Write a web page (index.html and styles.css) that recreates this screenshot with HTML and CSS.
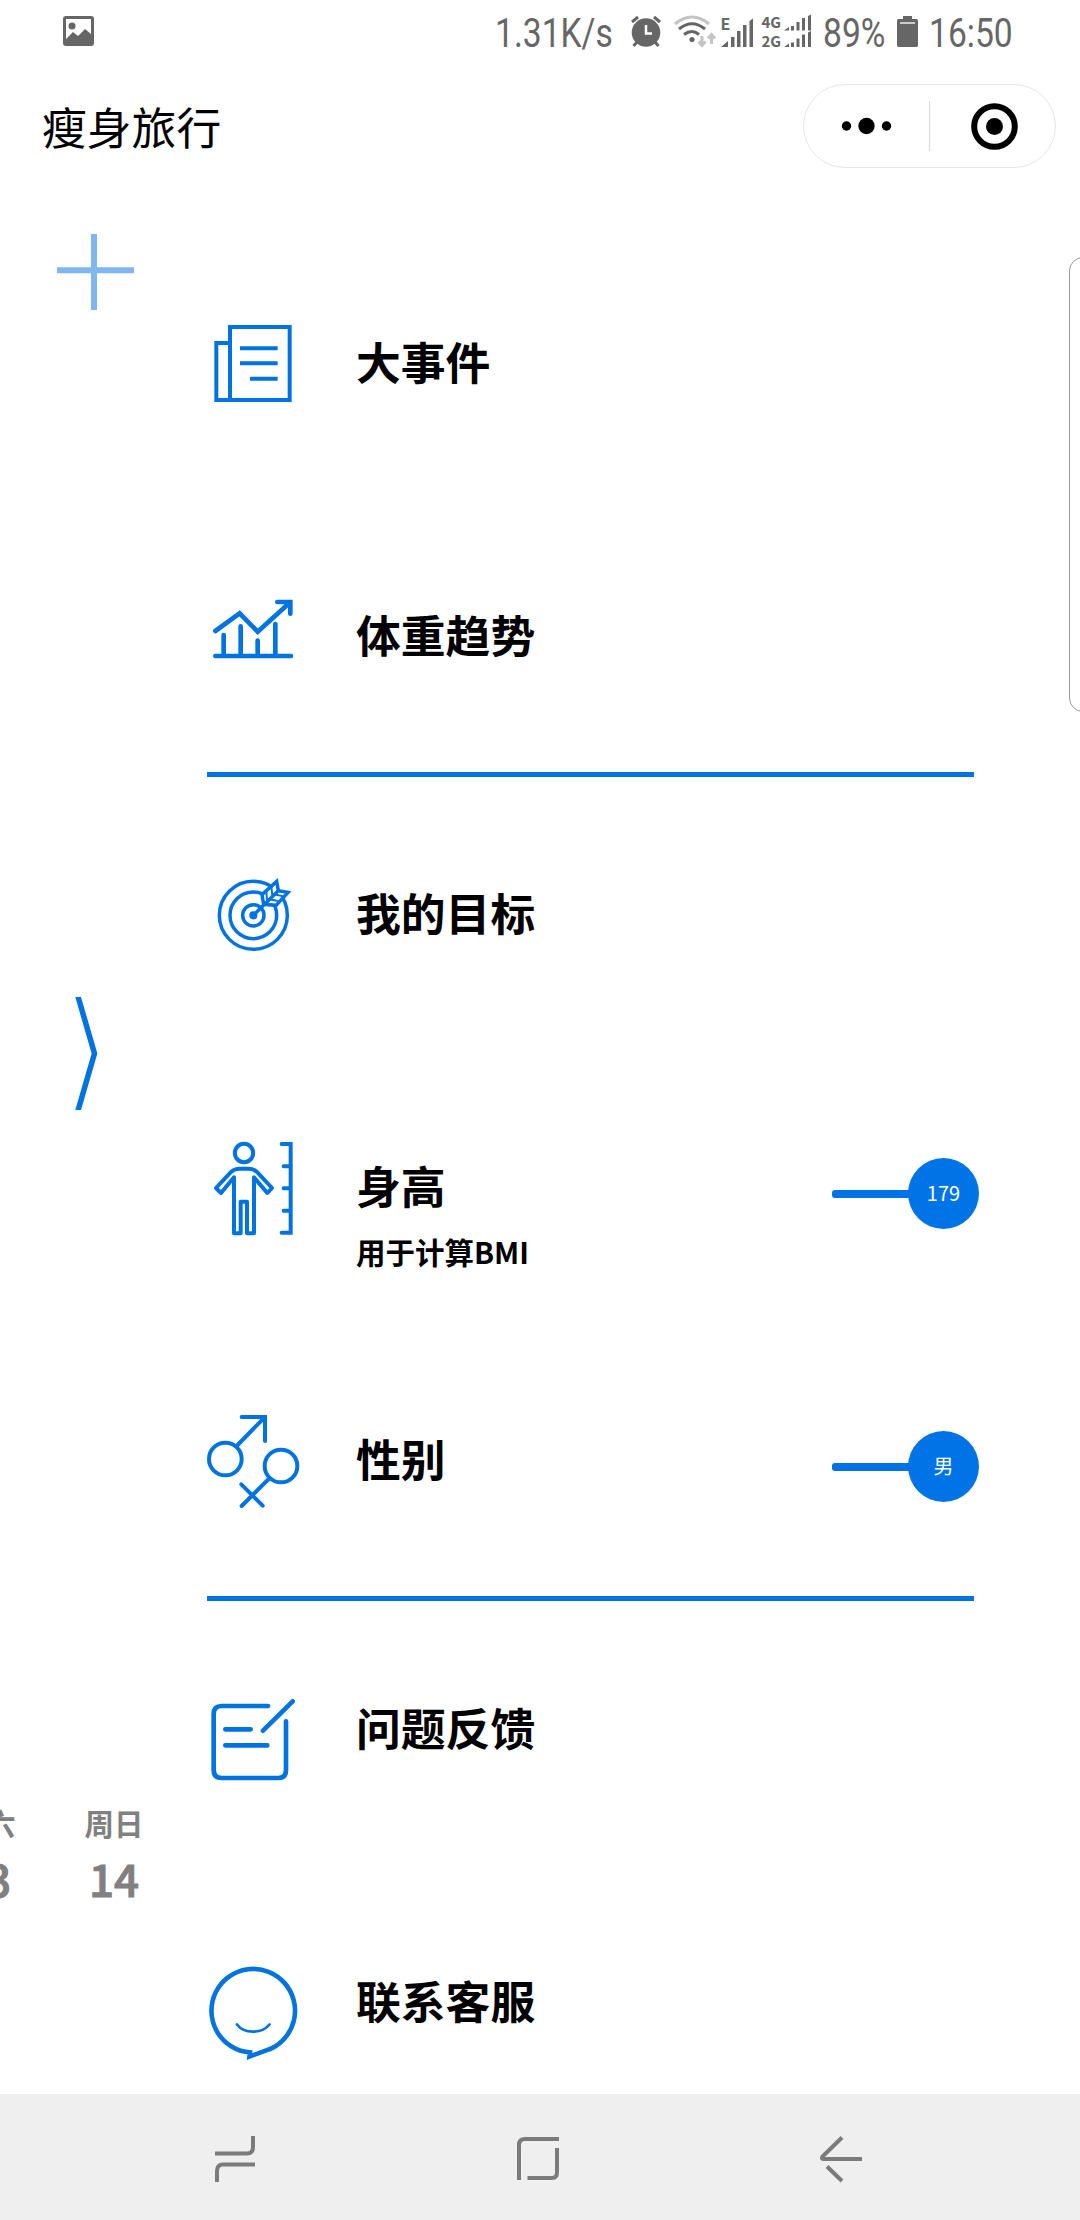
FILE: index.html
```html
<!DOCTYPE html>
<html lang="zh-CN">
<head>
    <meta charset="UTF-8">
    <meta name="viewport" content="width=device-width, initial-scale=1.0">
    <title>瘦身旅行</title>
    <link rel="stylesheet" href="styles.css">
</head>
<body>
    <div class="status-bar">
        <svg class="photo-icon" width="32" height="32" viewBox="0 0 32 32">
            <path fill-rule="evenodd" d="M3 0H28Q31 0 31 3V27Q31 30 28 30H3Q0 30 0 27V3Q0 0 3 0ZM3 3V23L10 16L15 20L22 13L28 18V3Z"/>
            <circle cx="9" cy="10" r="3.5"/>
        </svg>
        <span class="status-text speed"><span>1.31K/s</span></span>
        <svg class="status-icons" width="182" height="34" viewBox="630 14 182 34">
            <!-- alarm -->
            <circle cx="646" cy="32.5" r="14.3"/>
            <path class="line" d="M632 22L638 17M660 22L654 17M637 42L633.5 46M655 42L658.5 46"/>
            <path class="cut" d="M646 25V33.5H652"/>
            <!-- wifi -->
            <path class="line light" d="M675 24Q692 10 709 24"/>
            <path class="line" d="M679 29Q692 18.5 705 29M684 34.5Q692 28.5 699 34.5"/>
            <circle cx="692" cy="39.5" r="2.6"/>
            <path class="line light" d="M702 36V45M698.5 41.5L702 45.5L705.5 41.5M711.5 44V35M708 38.5L711.5 34.5L715 38.5"/>
            <!-- signals -->
            <text x="720.5" y="30" font-size="16">E</text>
            <path d="M721 47L728 41V47ZM731 37h3.5V47h-3.5ZM737 31h3.5V47h-3.5ZM743 25h3.5V47h-3.500ZM749.5 21l3.5 -2.5V47h-3.5Z"/>
            <text x="761.5" y="28" font-size="15">4G</text>
            <text x="761.5" y="46.5" font-size="15">2G</text>
            <path id="bars" d="M784 30.5L789 27V30.5ZM791 26h3V30.5h-3ZM796.5 22h3V30.5h-3ZM802 18h3V30.5h-3ZM808 16l3 -1.5V30.5h-3Z"/>
            <use href="#bars" y="16.5"/>
        </svg>
        <span class="status-text percent"><span>89%</span></span>
        <svg class="battery" width="22" height="32" viewBox="0 0 22 32">
            <path d="M6 0H15V3H19.5Q21 3 21 5V29Q21 31 19.5 31H1.500Q0 31 0 29V5Q0 3 1.5 3H6Z"/>
            <path class="battery-line" d="M3 7H18"/>
        </svg>
        <span class="status-text clock"><span>16:50</span></span>
    </div>

    <header class="nav-bar">
        <h1>瘦身旅行</h1>
        <div class="capsule">
            <svg width="125" height="84" viewBox="0 0 125 84">
                <circle cx="42.5" cy="42" r="4.7"/>
                <circle cx="62.5" cy="42" r="8.2"/>
                <circle cx="82.5" cy="42" r="4.7"/>
            </svg>
            <span class="capsule-line"></span>
            <svg width="124" height="84" viewBox="0 0 124 84">
                <circle class="ring" cx="64.5" cy="42.500" r="20.3"/>
                <circle cx="64.5" cy="42.5" r="8.5"/>
            </svg>
        </div>
    </header>

    <main class="content">
        <div class="page-edge">
            <svg class="plus" width="78" height="76" viewBox="0 0 78 76">
                <path d="M0 36.3H77M37 0V76"/>
            </svg>
            <svg class="arrow" width="26" height="113" viewBox="0 0 26 113">
                <path d="M2 -4L19.5 56.5L2 117"/>
            </svg>
            <div class="dates">
                <div class="date"><span>周六</span><b>13</b></div>
                <div class="date"><span>周日</span><b>14</b></div>
            </div>
        </div>

        <div class="menu">
            <div class="group">
                <div class="item">
                    <svg class="icon square" viewBox="0 9 363 363">
                        <path d="M120 303V84H299V303H79V132H120"/>
                        <path d="M150 148H263M150 193H263M180 239H263"/>
                    </svg>
                    <div class="label">大事件</div>
                </div>
                <div class="item">
                    <svg class="icon thick" viewBox="0 -12 363 363">
                        <path stroke-linejoin="miter" d="M76 156L149 103L203 158L298 72"/>
                        <path stroke-linejoin="miter" d="M262 69H301V104M290 72L300 82"/>
                        <path d="M76 231H303M101 168V231M152 142V231M203 185V231M256 135V231"/>
                    </svg>
                    <div class="label">体重趋势</div>
                </div>
            </div>

            <div class="group">
                <div class="item">
                    <svg class="icon target" viewBox="0 -21 363 363">
                        <circle cx="190" cy="166" r="102"/>
                        <circle cx="190" cy="166" r="70"/>
                        <circle cx="190" cy="166" r="32"/>
                        <circle class="dot" cx="190" cy="166" r="7"/>
                        <path class="feather" d="M216 104L260 64L265 92L294 97L258 136L221 133Z"/>
                        <path d="M190 166L264 93"/>
                        <path class="thin" d="M229 94L231 120M244 80L247 106M237 118L261 122M252 103L276 108"/>
                    </svg>
                    <div class="label">我的目标</div>
                </div>
                <div class="item">
                    <svg class="icon" viewBox="450 438 363 363">
                        <circle cx="612" cy="519" r="27.5"/>
                        <path d="M598 566H626Q640 566 650 575L696 624L682 639L642 592V760H621V665H602V760H582V592L543 639L528 624L574 575Q584 566 598 566Z"/>
                        <path stroke-linejoin="miter" d="M725 492H752V758H725M731 559H752M731 625H752M731 692H752"/>
                    </svg>
                    <div class="label">身高<small>用于计算BMI</small></div>
                    <div class="slider"><span class="value">179</span></div>
                </div>
                <div class="item">
                    <svg class="icon" viewBox="0 27 363 363">
                        <circle cx="106" cy="207" r="49"/>
                        <circle cx="273" cy="228" r="49"/>
                        <path stroke-linejoin="miter" d="M140 168L223 83M155 81H225V153"/>
                        <path d="M238 265L155 348M154 283L218 347"/>
                    </svg>
                    <div class="label">性别</div>
                    <div class="slider"><span class="value">男</span></div>
                </div>
            </div>

            <div class="group">
                <div class="item">
                    <svg class="icon thick" viewBox="0 -36 363 363">
                        <path d="M234 78H95Q71 78 71 102V270Q71 294 95 294H265Q288 294 288 270V124"/>
                        <path d="M106 148H182M106 196H232M219 152L308 64"/>
                    </svg>
                    <div class="label">问题反馈</div>
                </div>
                <div class="item">
                    <svg class="icon chat" viewBox="0 0 121 121">
                        <path d="M77 109.2A41.8 41.8 0 1 0 60 111.400L59.500 115.500Z"/>
                        <path class="smile" d="M47 83.5C54 93 72 93 79.5 83.5"/>
                    </svg>
                    <div class="label">联系客服</div>
                </div>
            </div>
        </div>
    </main>

    <div class="edge-handle"></div>

    <footer class="system-nav">
        <svg width="48" height="50" viewBox="0 0 48 50">
            <path d="M4 19.5H36Q42 19.5 42 13V2M44 30.5H12Q6 30.5 6 37V48"/>
        </svg>
        <svg width="48" height="50" viewBox="0 0 48 50">
            <path d="M5 46V11Q5 5 11 5H45M13.5 44H38Q43 44 43 38V14"/>
        </svg>
        <svg width="48" height="50" viewBox="0 0 48 50">
            <path d="M25 3.5L5.5 22.5Q4 25 7 25H45M10 32.5L25 47"/>
        </svg>
    </footer>
</body>
</html>
```

FILE: styles.css
```css
* {
    box-sizing: border-box;
}

body {
    margin: 0;
    width: 1080px;
    height: 2220px;
    display: flex;
    flex-direction: column;
    position: relative;
    overflow: hidden;
    background-color: #fff;
    color: #000;
    font-family: 'Noto Sans CJK SC', sans-serif;
}

svg {
    display: block;
    flex-shrink: 0;
}

/* Status bar */
.status-bar {
    height: 68px;
    display: flex;
    align-items: flex-start;
    padding-left: 63px;
    color: #666;
    fill: #666;
    font-family: Roboto, sans-serif;
}

.photo-icon {
    margin-top: 16px;
}

.status-text {
    font-size: 40px;
    line-height: 46px;
    margin-top: 11px;
    white-space: nowrap;
}

.status-text span {
    display: inline-block;
    transform-origin: left;
    transform: scaleX(0.84);
}

.speed {
    width: 135px;
    margin-left: 400px;
}

.status-icons {
    margin-top: 14px;
    overflow: visible;
}

.status-icons text {
    font-family: 'Noto Sans CJK SC', sans-serif;
    font-weight: 700;
}

.line {
    fill: none;
    stroke: #666;
    stroke-width: 3;
}

.light {
    stroke: #c4c4c4;
}

.cut {
    fill: none;
    stroke: #fff;
    stroke-width: 2.5;
}

.percent {
    width: 74px;
    margin-left: 11px;
}

.battery {
    margin-top: 16px;
}

.battery-line {
    stroke: #ccc;
    stroke-width: 2;
}

.clock {
    margin-left: 10px;
}

/* Title */
.nav-bar {
    height: 122px;
    display: flex;
    justify-content: space-between;
    align-items: flex-start;
    padding: 16px 24px 0 42px;
}

h1 {
    margin: 0;
    font-size: 44.8px;
    font-weight: 400;
    line-height: 83px;
}

.capsule {
    width: 253px;
    height: 84px;
    display: flex;
    align-items: center;
    border: 1px solid #e6e6e6;
    border-radius: 42px;
}

.capsule-line {
    width: 1px;
    height: 50px;
    flex-shrink: 0;
    background-color: #d8d8d8;
}

.ring {
    fill: none;
    stroke: #000;
    stroke-width: 6;
}

/* Content */
.content {
    height: 1904px;
    display: flex;
    overflow: hidden;
}

.page-edge {
    width: 190px;
    flex-shrink: 0;
    fill: none;
    stroke: #0073e0;
}

.plus {
    margin: 44px 0 0 57px;
    stroke: #80b7ef;
    stroke-width: 6;
}

.arrow {
    margin: 687px 0 0 75px;
    stroke-width: 5.5;
}

.dates {
    display: flex;
    justify-content: flex-end;
    width: 178px;
    margin-top: 690px;
    overflow: hidden;
    color: #808080;
}

.date {
    width: 128px;
    flex-shrink: 0;
    display: flex;
    flex-direction: column;
    align-items: center;
    font-size: 29.5px;
    font-weight: 700;
    line-height: 44px;
}

.date b {
    margin-top: 3px;
    font-size: 44px;
    font-weight: 500;
    line-height: 62px;
    -webkit-text-stroke: 1px #808080;
}

.menu {
    width: 890px;
    padding-top: 36px;
}

.group {
    margin: 0 106px 0 17px;
    border-bottom: 5px solid #0073e0;
}

.group:last-child {
    margin-top: -9px;
    border-bottom: none;
}

.item {
    height: 273px;
    display: flex;
    align-items: center;
    margin: 0 -5px 0 -17px;
}

.icon {
    width: 121px;
    height: 121px;
    fill: none;
    stroke: #0073e0;
    stroke-width: 12;
    stroke-linecap: round;
    stroke-linejoin: round;
}

.square {
    stroke-linecap: butt;
    stroke-linejoin: miter;
}

.thick {
    stroke-width: 14;
}

.target {
    stroke-width: 10.5;
    stroke-linejoin: miter;
}

.dot {
    fill: #0073e0;
}

.feather {
    fill: #fff;
}

.thin {
    stroke-width: 6;
}

.chat {
    stroke-width: 4.6;
    stroke-linejoin: miter;
}

.smile {
    stroke-width: 2.8;
}

.label {
    position: relative;
    flex: 1;
    margin: -3px 0 0 45px;
    font-size: 44.8px;
    font-weight: 700;
    line-height: 64px;
}

/* caption hangs under the label without moving it */
.label small {
    position: absolute;
    top: 76px;
    left: 0;
    font-size: 29.5px;
    line-height: 44px;
}

.slider {
    width: 147px;
    margin-top: 14px;
    display: flex;
    align-items: center;
}

.slider::before {
    content: '';
    flex: 1;
    height: 8px;
    margin-right: -2px;
    border-radius: 3px 0 0 3px;
    background-color: #0073e6;
}

.value {
    width: 71px;
    height: 71px;
    border-radius: 50%;
    background-color: #0073e6;
    color: #fff;
    font-size: 20px;
    line-height: 69px;
    text-align: center;
}

/* Edge panel handle, lies over the page and runs off the right side */
.edge-handle {
    position: absolute;
    top: 257px;
    right: -20px;
    width: 31px;
    height: 455px;
    border: 1px solid #999;
    border-radius: 14px;
}

/* System navigation */
.system-nav {
    height: 126px;
    display: flex;
    justify-content: space-between;
    padding: 40px 215px 0 211px;
    background-color: #efefef;
    fill: none;
    stroke: #7b7b7b;
    stroke-width: 4;
}
```
